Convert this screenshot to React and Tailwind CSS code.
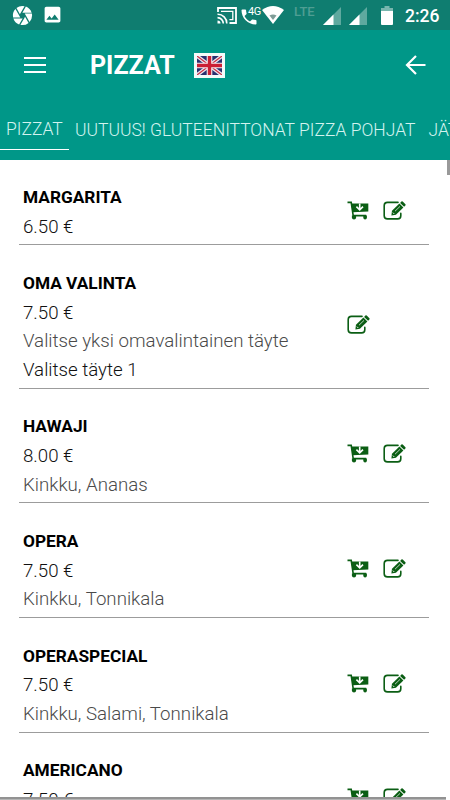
import { MdPhone, MdCamera, MdImage } from "react-icons/md";

const tabs = ["PIZZAT", "UUTUUS! GLUTEENITTONAT PIZZA POHJAT", "JÄTTIPIZZAT"];

const pizzas = [
  { id: 1, name: "MARGARITA", price: "6.50 €", cart: true },
  {
    id: 2,
    name: "OMA VALINTA",
    price: "7.50 €",
    toppings: "Valitse yksi omavalintainen täyte",
    choice: "Valitse täyte 1",
    cart: false,
  },
  { id: 3, name: "HAWAJI", price: "8.00 €", toppings: "Kinkku, Ananas", cart: true },
  { id: 4, name: "OPERA", price: "7.50 €", toppings: "Kinkku, Tonnikala", cart: true },
  { id: 5, name: "OPERASPECIAL", price: "7.50 €", toppings: "Kinkku, Salami, Tonnikala", cart: true },
  { id: 6, name: "AMERICANO", price: "7.50 €", toppings: "Kinkku, Ananas, Aurajuusto", cart: true },
];

function CartIcon() {
  return (
    <svg width="22" height="19" viewBox="0 0 22 19" fill="none">
      <path d="M0.5 1.4H4.2L6.2 14.6H19.2" stroke="#0b5e14" strokeWidth="1.6" />
      <path d="M4.2 2.4H21.3V10.4L5.6 11.2Z" fill="#0b5e14" />
      <path d="M12.7 2.6V8.6M9.4 5.6L12.7 8.9L16 5.6" stroke="#fff" strokeWidth="1.6" />
      <path d="M4.9 14.4H9.1V16.6Q9.1 18.6 7 18.6Q4.9 18.6 4.9 16.6Z" fill="#0b5e14" />
      <path d="M16.3 14.4H19.9V16.6Q19.9 18.6 18.1 18.6Q16.3 18.6 16.3 16.6Z" fill="#0b5e14" />
    </svg>
  );
}

function EditIcon() {
  return (
    <svg width="23" height="19" viewBox="0 0 23 19" fill="none">
      <path
        d="M15 1.4H4.5Q1.2 1.4 1.2 4.7V14.7Q1.2 17.9 4.5 17.9H14.6Q17.8 17.9 17.8 14.7V12.4"
        stroke="#0b5e14"
        strokeWidth="1.6"
        strokeLinecap="round"
      />
      <path d="M8.4 14.5L9 9.8L16.4 2.6L20.4 6.4L12.9 13.8Z" fill="#0b5e14" />
      <path d="M17.1 1.9L18.4 0.6Q19 0 19.7 0.6L22.4 3.2Q23 3.8 22.4 4.4L21.1 5.7Z" fill="#0b5e14" />
      <path d="M12 10.2L17 5.4" stroke="#fff" strokeWidth="0.7" />
      <path d="M9.9 11.6L11.3 13" stroke="#fff" strokeWidth="0.9" />
    </svg>
  );
}

function Flag() {
  return (
    <svg width="31" height="25" viewBox="0 0 31 25">
      <rect width="31" height="25" fill="#f4fbfa" />
      <rect x="3" y="3" width="25" height="19" fill="#29306f" />
      <path d="M3 3L28 22M28 3L3 22" stroke="#eee6ee" strokeWidth="3.6" />
      <path d="M3 3L28 22M28 3L3 22" stroke="#c92d42" strokeWidth="1.1" />
      <path d="M15.5 3V22M3 12.5H28" stroke="#f5eef2" strokeWidth="5.6" />
      <path d="M15.5 3V22M3 12.5H28" stroke="#cb1f34" strokeWidth="3.4" />
      <path d="M0 0H31V25H0ZM3 3V22H28V3Z" fill="#f4fbfa" fillRule="evenodd" />
    </svg>
  );
}

function Signal() {
  return (
    <svg width="18" height="18" viewBox="0 0 18 18">
      <path d="M0 18L18 0V18Z" fill="#5fa99f" />
      <path d="M0 18L10.5 7.5V18Z" fill="#fff" />
    </svg>
  );
}

function StatusBar() {
  return (
    <div className="flex h-[30px] items-start bg-[#0f7d70] text-white">
      <MdCamera className="ml-[11px] mt-[4px] h-[23px] w-[23px] shrink-0" />
      <MdImage className="ml-[8px] mt-[4px] h-[21px] w-[21px] shrink-0" />
      <svg className="ml-[154px] mt-[7px] shrink-0" width="20" height="17" viewBox="0 0 20 17" fill="none">
        <path d="M1 5V1H19V16H12.5" stroke="#fff" strokeWidth="1.8" />
        <path d="M4 4.4H15.8V12.6H12.4" stroke="#fff" strokeWidth="1.3" />
        <path d="M0.5 7.3A9 9 0 0 1 9.8 16.5M0.5 10.6A6 6 0 0 1 6.3 16.5" stroke="#fff" strokeWidth="1.6" />
        <path d="M0.5 13.5A3 3 0 0 1 3.5 16.5H0.5Z" fill="#fff" />
      </svg>
      <div className="relative ml-[3px] mt-[6px] h-[20px] w-[20px] shrink-0">
        <MdPhone className="mt-[1px] h-[20px] w-[20px] -ml-px" />
        <span className="absolute left-[8px] top-0 text-[11px] leading-[11px] tracking-[-0.5px]">4G</span>
      </div>
      <svg className="ml-[2px] mt-[6px] shrink-0" width="22" height="18" viewBox="0 0 22 18">
        <path d="M0 4Q11 -4 22 4L11 18Z" fill="#fff" />
        <path d="M7.5 9.5Q11 7.5 14.5 9.5L11 14Z" fill="#7f9c97" />
      </svg>
      <span className="ml-[10px] mt-[5px] w-[22px] shrink-0 text-[13px] font-medium leading-[13px] text-[#4f9e93]">LTE</span>
      <span className="ml-[7px] mt-[7px] shrink-0"><Signal /></span>
      <span className="ml-[8px] mt-[7px] shrink-0"><Signal /></span>
      <svg className="ml-[14px] mt-[6px] shrink-0" width="12" height="19" viewBox="0 0 12 19">
        <path d="M3.5 0H8.5V2H12V7H0V2H3.5Z" fill="#79b6ae" />
        <path d="M0 5H12V18Q12 19 11 19H1Q0 19 0 18Z" fill="#fff" />
      </svg>
      <span className="ml-[12px] mt-[5px] text-[17.5px] font-medium leading-[22px]">2:26</span>
    </div>
  );
}

function Header() {
  return (
    <header className="h-[160px] overflow-hidden bg-[#009788]">
      <StatusBar />
      <div className="flex h-[70px] items-center pl-[24px] pr-[24px]">
        <div className="flex w-[22px] flex-col gap-[5px]">
          <div className="h-[2px] bg-white" />
          <div className="h-[2px] bg-white" />
          <div className="h-[2px] bg-white" />
        </div>
        <h1 className="ml-[44px] w-[84px] text-[25px] font-bold leading-none text-white">PIZZAT</h1>
        <div className="ml-[20px]">
          <Flag />
        </div>
        <svg className="ml-auto" width="21" height="20" viewBox="0 0 21 20" fill="none" stroke="#fff" strokeWidth="2.2">
          <path d="M20.5 10H2M11 1L2 10L11 19" />
        </svg>
      </div>
      <nav className="flex h-[60px] whitespace-nowrap text-[17.5px] font-light text-[#d3f3ef]">
        {tabs.map((tab, i) => (
          <div
            key={tab}
            className={
              i === 0
                ? "h-[50px] w-[69px] shrink-0 border-b border-white pl-[6px] leading-[58px]"
                : "h-[50px] shrink-0 pl-[6px] pr-[7px] leading-[60px]"
            }
          >
            {tab}
          </div>
        ))}
      </nav>
    </header>
  );
}

function PizzaRow({ pizza }) {
  return (
    <div className="flex items-center border-b border-[#9c9c9c] pb-[3px] pl-[4px] pt-[23.67px]">
      <div className="flex-1 text-[18.7px] font-light leading-[28.67px] text-[#111]">
        <p className="text-[17.3px] font-bold text-black">{pizza.name}</p>
        <div className="pt-px">
          <p>{pizza.price}</p>
          {pizza.toppings && <p className="text-[#4a4a4a]">{pizza.toppings}</p>}
          {pizza.choice && <p>{pizza.choice}</p>}
        </div>
      </div>
      <div className="-mt-[4px] flex w-[82px] gap-[14px]">
        {pizza.cart && <CartIcon />}
        <EditIcon />
      </div>
    </div>
  );
}

export default function App() {
  return (
    <div className="flex h-[800px] w-[450px] flex-col overflow-hidden bg-white font-['Roboto',sans-serif]">
      <Header />
      <main className="relative h-[637px] overflow-hidden pl-[19px] pr-[21px]">
        <div className="-mt-[0.6px]">
          {pizzas.map((pizza) => (
            <PizzaRow key={pizza.id} pizza={pizza} />
          ))}
        </div>
        {/* scrollbar thumb */}
        <div className="absolute right-0 top-0 h-[15px] w-[3px] bg-[#999]" />
      </main>
      <div className="h-[3px] w-[446px] border-b border-[#b5b5b5] bg-[#929292]" />
    </div>
  );
}
